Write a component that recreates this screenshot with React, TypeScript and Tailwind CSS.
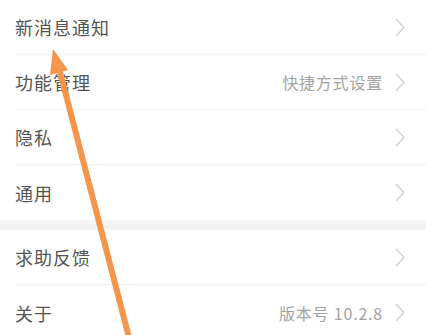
import React from "react";

const font = { fontFamily: '"Noto Sans CJK SC", "Noto Sans", sans-serif' };

function Chevron() {
  return (
    <svg width="11" height="19" viewBox="0 0 11 19" className="shrink-0">
      <polyline points="1.5,1.5 9,9.5 1.5,17.5" fill="none" stroke="#d2d2d2" strokeWidth="1.4" strokeLinecap="round" strokeLinejoin="round" />
    </svg>
  );
}

function Row({ label, value, last }: { label: string; value?: string; last?: boolean }) {
  return (
    <div className="flex h-[55px] pl-[15px] bg-white">
      <div className={`flex flex-1 items-center pr-[20px] ${last ? "" : "border-b border-[#f1f1f1]"}`}>
        <span className="flex-1 text-[18px] tracking-[1px] text-[#555555] leading-none">{label}</span>
        {value && <span className="text-[16px] tracking-[0.8px] text-[#a3a3a3] leading-none mr-[12px]">{value}</span>}
        <Chevron />
      </div>
    </div>
  );
}

export default function App() {
  return (
    <div className="relative w-[426px] h-[335px] overflow-hidden bg-white" style={font}>
      <div className="flex flex-col">
        <Row label="新消息通知" />
        <Row label="功能管理" value="快捷方式设置" />
        <Row label="隐私" />
        <Row label="通用" last />
        <div className="h-[10px] bg-[#f4f4f4]" />
        <Row label="求助反馈" />
        <Row label="关于" value="版本号 10.2.8" last />
      </div>
      <svg className="absolute left-0 top-0 pointer-events-none" width="426" height="335" viewBox="0 0 426 335">
        <line x1="60" y1="72" x2="131" y2="345" stroke="#f6964c" strokeWidth="6" />
        <polygon points="53,49 68,70 50,75" fill="#f6964c" />
      </svg>
    </div>
  );
}
